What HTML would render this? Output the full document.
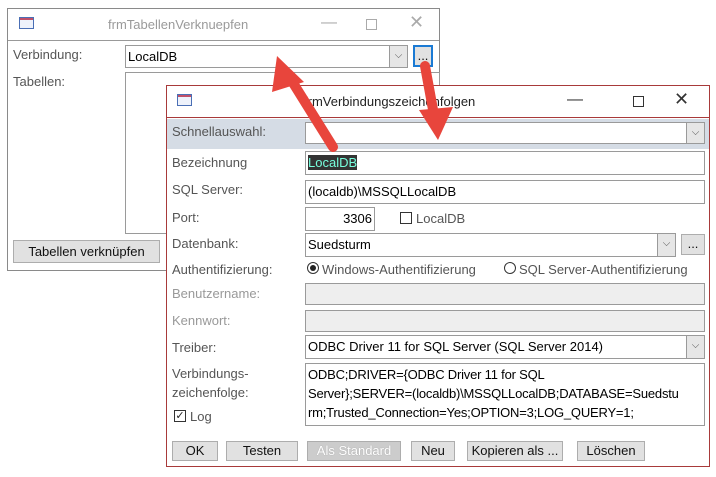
<!DOCTYPE html>
<html><head><meta charset="utf-8"><style>
*{box-sizing:border-box;margin:0;padding:0}
body{width:716px;height:477px;background:#fff;position:relative;overflow:hidden;font-family:"Liberation Sans",sans-serif;font-size:13px;color:#222}
.a{position:absolute}
.win{position:absolute;background:#fff}
.lbl{position:absolute;color:#555;font-size:13px}
.box{position:absolute;border:1px solid #9a9a9a;background:#fff;padding:3px 2px;white-space:nowrap;font-size:13px;color:#000;line-height:16px}
.dd{position:absolute;right:0;top:0;bottom:0;width:18px;background:#e6e6e6;border-left:1px solid #9a9a9a;text-align:center;font-size:10px;color:#555;line-height:20px}
.btn{position:absolute;background:#e1e1e1;border:1px solid #adadad;text-align:center;font-size:13px;line-height:18px;color:#111}
.ico{position:absolute;width:15px;height:12px;border:1px solid #4a6fb5;background:#eef2fb}
.ico:before{content:"";position:absolute;left:0;right:0;top:0;height:2px;background:#c0506a}
</style></head><body>
<div class="win" style="left:7px;top:8px;width:433px;height:263px;border:1px solid #8a8a8a">
 <div class="ico" style="left:11px;top:8px"></div>
 <div class="a" style="left:0;right:0;top:0;height:32px;border-bottom:1px solid #999"></div>
 <div class="a" style="left:100px;top:8px;color:#9a9a9a;font-size:13px">frmTabellenVerknuepfen</div>
 <div class="a" style="left:313px;top:5px;color:#aaa;font-size:16px">—</div>
 <div class="a" style="left:358px;top:10px;width:11px;height:11px;border:1px solid #aaa"></div>
 <div class="a" style="left:401px;top:3px;color:#aaa;font-size:18px">✕</div>
</div>
<div class="lbl" style="left:13px;top:47px">Verbindung:</div>
<div class="lbl" style="left:13px;top:74px">Tabellen:</div>
<div class="box" style="left:125px;top:45px;width:283px;height:23px">LocalDB<div class="dd">⌵</div></div>
<div class="btn" style="left:413px;top:45px;width:20px;height:22px;border:2px solid #1a7ad4;line-height:18px">...</div>
<div class="a" style="left:125px;top:72px;width:315px;height:162px;border:1px solid #9a9a9a"></div>
<div class="btn" style="left:13px;top:240px;width:147px;height:23px;line-height:21px">Tabellen verknüpfen</div>

<div class="win" style="left:166px;top:85px;width:544px;height:382px;border:1px solid #a83a3a">
 <div class="ico" style="left:10px;top:8px"></div>
 <div class="a" style="left:0;right:0;top:0;height:32px;border-bottom:1px solid #a83a3a"></div>
 <div class="a" style="left:137px;top:8px;color:#222;font-size:13px">frmVerbindungszeichenfolgen</div>
 <div class="a" style="left:400px;top:5px;color:#333;font-size:16px">—</div>
 <div class="a" style="left:466px;top:10px;width:11px;height:11px;border:1px solid #333"></div>
 <div class="a" style="left:507px;top:3px;color:#333;font-size:18px">✕</div>
 <div class="a" style="left:0;right:0;top:33px;height:30px;background:#d5dce5"></div>
</div>
<div class="lbl" style="left:172px;top:124px">Schnellauswahl:</div>
<div class="box" style="left:305px;top:122px;width:400px;height:22px"><div class="dd">⌵</div></div>
<div class="lbl" style="left:172px;top:155px">Bezeichnung</div>
<div class="box" style="left:305px;top:151px;width:400px;height:24px"><span style="background:#333;color:#7fd">LocalDB</span></div>
<div class="lbl" style="left:172px;top:182px">SQL Server:</div>
<div class="box" style="left:305px;top:180px;width:400px;height:24px">(localdb)\MSSQLLocalDB</div>
<div class="lbl" style="left:172px;top:210px">Port:</div>
<div class="box" style="left:305px;top:207px;width:70px;height:24px;text-align:right">3306</div>
<div class="a" style="left:400px;top:212px;width:12px;height:12px;border:1px solid #333"></div>
<div class="lbl" style="left:416px;top:211px">LocalDB</div>
<div class="lbl" style="left:172px;top:236px">Datenbank:</div>
<div class="box" style="left:305px;top:233px;width:371px;height:24px">Suedsturm<div class="dd">⌵</div></div>
<div class="btn" style="left:681px;top:234px;width:24px;height:21px">...</div>
<div class="lbl" style="left:172px;top:262px">Authentifizierung:</div>
<div class="a" style="left:307px;top:262px;width:12px;height:12px;border:1px solid #333;border-radius:50%"><div class="a" style="left:2px;top:2px;width:6px;height:6px;background:#222;border-radius:50%"></div></div>
<div class="lbl" style="left:322px;top:262px">Windows-Authentifizierung</div>
<div class="a" style="left:504px;top:262px;width:12px;height:12px;border:1px solid #333;border-radius:50%"></div>
<div class="lbl" style="left:519px;top:262px">SQL Server-Authentifizierung</div>
<div class="lbl" style="left:172px;top:286px;color:#999">Benutzername:</div>
<div class="box" style="left:305px;top:283px;width:400px;height:22px;background:#eee"></div>
<div class="lbl" style="left:172px;top:313px;color:#999">Kennwort:</div>
<div class="box" style="left:305px;top:310px;width:400px;height:22px;background:#eee"></div>
<div class="lbl" style="left:172px;top:340px">Treiber:</div>
<div class="box" style="left:305px;top:335px;width:400px;height:24px">ODBC Driver 11 for SQL Server (SQL Server 2014)<div class="dd">⌵</div></div>
<div class="lbl" style="left:172px;top:364px;line-height:19px">Verbindungs-<br>zeichenfolge:</div>
<div class="box" style="left:305px;top:363px;width:400px;height:63px;line-height:19px;padding:1px 2px;letter-spacing:-0.2px">ODBC;DRIVER={ODBC Driver 11 for SQL<br>Server};SERVER=(localdb)\MSSQLLocalDB;DATABASE=Suedstu<br>rm;Trusted_Connection=Yes;OPTION=3;LOG_QUERY=1;</div>
<div class="a" style="left:174px;top:410px;width:12px;height:12px;border:1px solid #333;font-size:11px;line-height:10px;text-align:center">✓</div>
<div class="lbl" style="left:190px;top:409px">Log</div>
<div class="btn" style="left:172px;top:441px;width:46px;height:20px">OK</div>
<div class="btn" style="left:226px;top:441px;width:72px;height:20px">Testen</div>
<div class="btn" style="left:307px;top:441px;width:94px;height:20px;color:#fff;background:#ccc;text-shadow:0 0 1px #999">Als Standard</div>
<div class="btn" style="left:411px;top:441px;width:44px;height:20px">Neu</div>
<div class="btn" style="left:467px;top:441px;width:96px;height:20px">Kopieren als ...</div>
<div class="btn" style="left:577px;top:441px;width:68px;height:20px">Löschen</div>

<svg class="a" style="left:0;top:0" width="716" height="477">
 <line x1="333" y1="147" x2="290" y2="78" stroke="#e8453c" stroke-width="10" stroke-linecap="round"/>
 <polygon points="277,56 304,82 272,92" fill="#e8453c"/>
 <line x1="425" y1="66" x2="434" y2="115" stroke="#e8453c" stroke-width="10" stroke-linecap="round"/>
 <polygon points="438,140 419,110 453,107" fill="#e8453c"/>
</svg>
</body></html>
